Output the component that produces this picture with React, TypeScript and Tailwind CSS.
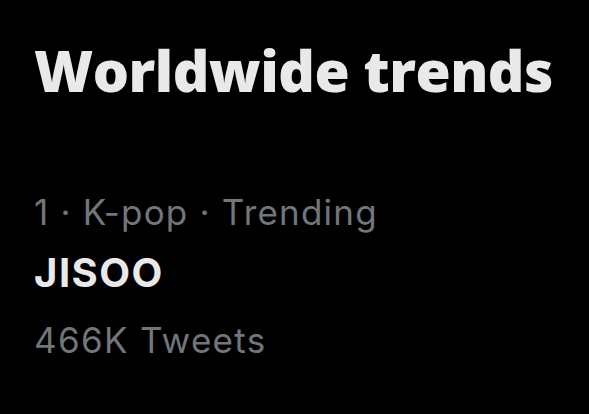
export default function App() {
  return (
    <div className="w-[589px] h-[414px] bg-black overflow-hidden pl-[34px] pt-[34px]" style={{ fontFamily: '"Open Sans", "Noto Sans", sans-serif' }}>
      <h1 className="text-[57px] leading-[72px] font-extrabold text-[#e7e9ea] tracking-[-0.5px]">Worldwide trends</h1>
      <div style={{ fontFamily: 'Inter, "Noto Sans", sans-serif' }}>
        <div className="mt-[86px] text-[35px] leading-[40px] text-[#71767b] tracking-[1.2px]">1 · K-pop · Trending</div>
        <div className="mt-[19px] text-[40px] leading-[44px] font-bold text-[#e7e9ea] tracking-[1.5px]">JISOO</div>
        <div className="mt-[25px] text-[35px] leading-[40px] text-[#71767b] tracking-[1.3px]">466K Tweets</div>
      </div>
    </div>
  );
}
